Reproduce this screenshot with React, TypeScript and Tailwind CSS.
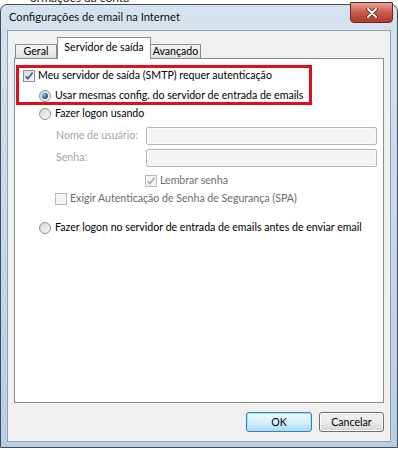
import React from "react";

function Check({ checked = false, disabled = false }: { checked?: boolean; disabled?: boolean }) {
  return (
    <span
      className={
        disabled
          ? "inline-flex w-[12px] h-[12px] shrink-0 items-center justify-center border border-[#b9b9b9] bg-[#f4f4f4]"
          : "inline-flex w-[12px] h-[12px] shrink-0 items-center justify-center border border-[#8e8f8f] bg-gradient-to-br from-[#d9d9d9] to-[#fbfbfb]"
      }
    >
      {checked && (
        <svg width="10" height="10" viewBox="0 0 10 10">
          <path
            d="M1.6 5.2 L3.9 7.8 L8.6 1.6"
            fill="none"
            stroke={disabled ? "#a9a9a9" : "#3657a6"}
            strokeWidth="1.6"
          />
        </svg>
      )}
    </span>
  );
}

function Radio({ on = false }: { on?: boolean }) {
  return (
    <span className="inline-flex w-[12px] h-[12px] shrink-0 items-center justify-center rounded-full border border-[#8e8f8f] bg-gradient-to-br from-[#d4d4d4] to-[#fbfbfb]">
      {on && (
        <span className="w-[6px] h-[6px] rounded-full bg-[radial-gradient(circle_at_35%_35%,#9cc9ef,#2a5d96_55%,#173a66)]" />
      )}
    </span>
  );
}

function Field() {
  return (
    <div className="w-[231px] h-[18px] rounded-[2px] border border-[#b3b7ba] bg-[#f3f3f3] shadow-[inset_0_0_0_1px_#fafafa]" />
  );
}

export default function App() {
  return (
    <div className="w-[398px] h-[450px] overflow-hidden whitespace-nowrap bg-white text-black font-['Lato','Noto_Sans',sans-serif] text-[10.6px]">
      {/* window behind, only a sliver shows */}
      <div className="h-[4px] overflow-hidden pl-[30px] text-[12px] leading-[12px] text-[#1c1c1c]">
        <div className="-mt-[8px]">ormações da conta</div>
      </div>

      <div className="relative h-[444px] rounded-t-[7px] border border-[#3f4d5c] bg-gradient-to-b from-[#d6e2ee] to-[#bccde0] px-[6px] pb-[5px] flex flex-col">
        <div className="h-[25px] flex items-center pl-[2px] text-[11.2px] text-[#111]">
          Configurações de email na Internet
        </div>

        <div className="absolute top-[-3px] right-[4px] w-[43px] h-[21px] rounded-b-[4px] border border-[#6b2a22] bg-gradient-to-b from-[#e3a196] via-[#c85a4c] to-[#b0392c] flex items-center justify-center">
          <svg width="12" height="10" viewBox="0 0 12 10">
            <path d="M2 1 L10 9 M10 1 L2 9" stroke="#4a1a14" strokeWidth="3.4" strokeLinecap="round" />
            <path d="M2 1 L10 9 M10 1 L2 9" stroke="#ffffff" strokeWidth="2" strokeLinecap="round" />
          </svg>
        </div>

        <div className="flex-1 border border-[#8fa2b6] bg-[#f0f0f0] px-[6px] flex flex-col">
          {/* tabs */}
          <div className="h-[27px] flex items-end pl-[1px]">
            <div className="w-[42px] h-[14px] border border-b-0 border-[#898c95] bg-gradient-to-b from-[#f5f5f5] to-[#e1e1e1] flex items-center justify-center leading-none">
              Geral
            </div>
            <div className="relative z-10 -mb-[1px] w-[94px] h-[22px] border border-b-0 border-[#898c95] bg-white flex items-start justify-center pt-[4px] leading-none">
              Servidor de saída
            </div>
            <div className="w-[50px] h-[14px] border border-b-0 border-l-0 border-[#898c95] bg-gradient-to-b from-[#f5f5f5] to-[#e1e1e1] flex items-center justify-center leading-none">
              Avançado
            </div>
          </div>

          {/* panel */}
          <div className="h-[345px] border border-[#898c95] bg-white flex flex-col">
            <div className="ml-[1px] mt-[6px] w-[296px] h-[40px] border-[3px] border-[#e0101b] flex flex-col pt-[1px]">
              <div className="h-[14px] flex items-center gap-[3px] pl-[4px]">
                <Check checked />
                <span>Meu servidor de saída (SMTP) requer autenticação</span>
              </div>
              <div className="mt-[6px] h-[14px] flex items-center gap-[4px] pl-[20px]">
                <Radio on />
                <span>Usar mesmas config. do servidor de entrada de emails</span>
              </div>
            </div>

            <div className="mt-[2px] ml-[24px] h-[14px] flex items-center gap-[4px]">
              <Radio />
              <span>Fazer logon usando</span>
            </div>

            <div className="mt-[6px] ml-[41px] h-[18px] flex items-center">
              <span className="w-[90px] text-[#a3a3a3]">Nome de usuário:</span>
              <Field />
            </div>
            <div className="mt-[4px] ml-[41px] h-[18px] flex items-center">
              <span className="w-[90px] text-[#a3a3a3]">Senha:</span>
              <Field />
            </div>

            <div className="mt-[7px] ml-[130px] h-[14px] flex items-center gap-[3px] text-[#707070]">
              <Check checked disabled />
              <span>Lembrar senha</span>
            </div>
            <div className="mt-[4px] ml-[40px] h-[14px] flex items-center gap-[3px] text-[#6a6a6a]">
              <Check disabled />
              <span>Exigir Autenticação de Senha de Segurança (SPA)</span>
            </div>

            <div className="mt-[15px] ml-[24px] h-[14px] flex items-center gap-[4px]">
              <Radio />
              <span>Fazer logon no servidor de entrada de emails antes de enviar email</span>
            </div>
          </div>

          {/* buttons */}
          <div className="mt-[9px] flex justify-end gap-[7px]">
            <button className="w-[66px] h-[20px] rounded-[3px] border border-[#3c7fb1] bg-gradient-to-b from-[#eaf6fd] via-[#d9f0fc] to-[#a7d9f5] shadow-[inset_0_0_0_1px_#9ee0ff] leading-none">
              OK
            </button>
            <button className="w-[65px] h-[20px] rounded-[3px] border border-[#707070] bg-gradient-to-b from-[#f2f2f2] via-[#ebebeb] to-[#d5d5d5] shadow-[inset_0_0_0_1px_#fcfcfc] leading-none">
              Cancelar
            </button>
          </div>
        </div>
      </div>
    </div>
  );
}
